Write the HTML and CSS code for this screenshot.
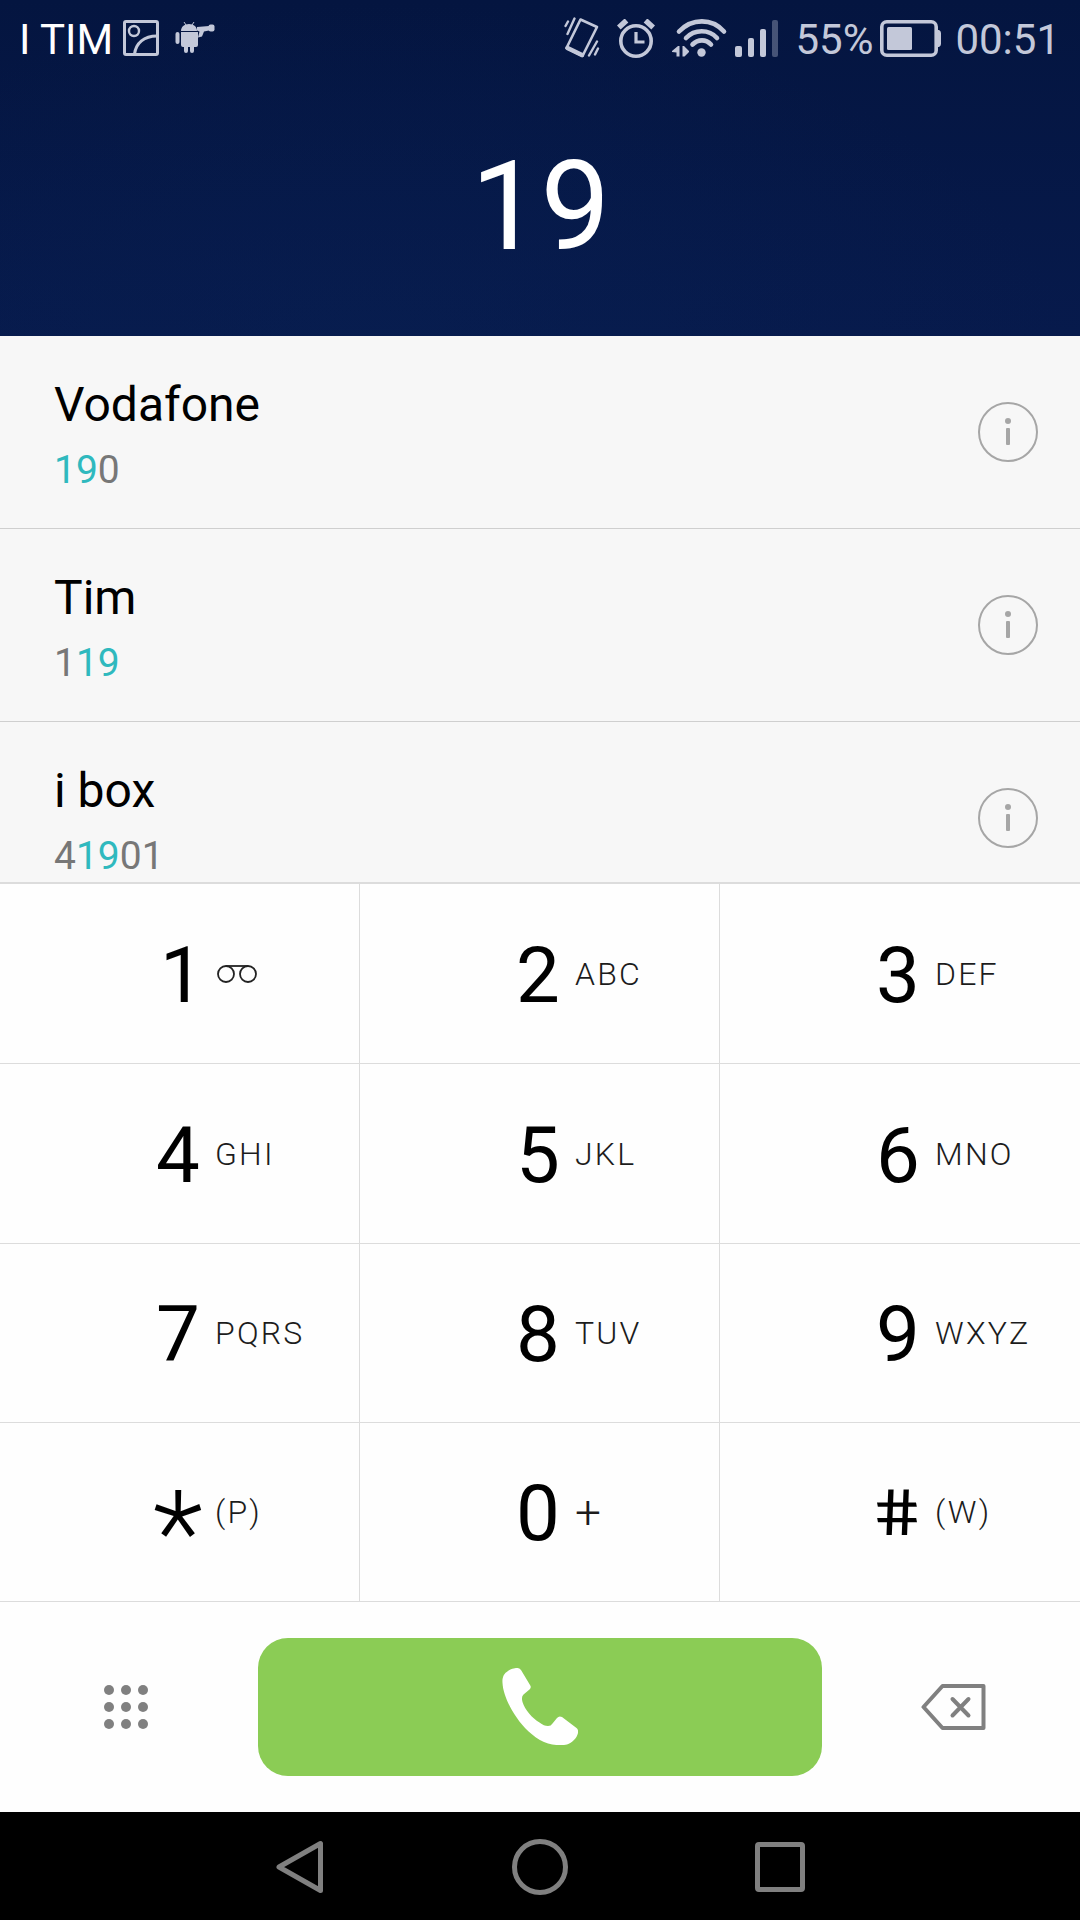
FILE: index.html
```html
<!DOCTYPE html>
<html lang="it">
<head>
  <meta charset="UTF-8">
  <title>Telefono</title>
  <link rel="stylesheet" href="styles.css">
</head>
<body>

  <header class="header">
    <div class="status-bar">
      <div class="status-left">
        <span class="carrier">I TIM</span>
        <svg class="icon-picture" width="36" height="36" viewBox="0 0 36 36" fill="none" stroke="currentColor" stroke-width="3">
          <rect x="1.5" y="1.5" width="33" height="33" rx="1.5"/>
          <circle cx="11" cy="11" r="5" stroke-width="2.4"/>
          <path d="M11.5 34C13 23 21 16 34 16"/>
        </svg>
        <svg class="icon-android" width="40" height="32" viewBox="0 0 40 32" fill="currentColor">
          <path d="M6 9C6 5 9 2 14 2s8 3 8 7z"/>
          <path d="M9 0l2 3M19 0l-2 3" stroke="currentColor" stroke-width="1"/>
          <path d="M6 10h17v13q0 2-2 2H19v4a2 2 0 0 1-4 0v-4h-2v4a2 2 0 0 1-4 0v-4H8q-2 0-2-2z"/>
          <rect x="0.5" y="10" width="4" height="12" rx="2"/>
          <path d="M22 5L34 4v4.500l-5 1-2 5-4 1 1.500-6-2.500-1z"/>
          <rect x="33.500" y="2.500" width="6" height="7" rx="2"/>
        </svg>
      </div>
      <div class="status-right">
        <svg class="icon-vibrate" width="36" height="42" viewBox="0 0 36 42" fill="none" stroke="currentColor" stroke-width="2.6" stroke-linecap="round" stroke-linejoin="round">
          <path d="M16.500 2.500L33 10 18.500 39 2.500 31z"/>
          <path d="M3.500 31l14.500 7" stroke-width="4.5"/>
          <path d="M10.500 1.500L3.500 17M4 4.500L1.500 9M33 24.500l-8 14M34 31.500l-3 6" stroke-width="2.4"/>
        </svg>
        <svg class="icon-alarm" width="38" height="39" viewBox="0 0 38 39" fill="none" stroke="currentColor">
          <circle cx="19" cy="22" r="15.2" stroke-width="3.6"/>
          <path d="M19 13v10h8.500" stroke-width="3.2"/>
          <path d="M1.800 8.500L9.500 1.500M28.500 1.500l7.700 7" stroke-width="5.5"/>
        </svg>
        <svg class="icon-wifi" width="56" height="38" viewBox="0 0 56 38" fill="none" stroke="currentColor" stroke-width="4.6" stroke-linecap="round">
          <path d="M7 12.500C20-1 40-1 52 12.500"/>
          <path d="M14 19c8.500-9 23-9 31 0"/>
          <path d="M20.500 25.500c5.500-5.500 13.500-5.500 18.500 0"/>
          <circle cx="29.500" cy="33.500" r="4.2" fill="currentColor" stroke="none"/>
          <path d="M7.500 27v10.500H4.500V33.500L0 33v-1l6-5zM10.500 27H12l5 5v1l-4.500 4.500h-2z" fill="currentColor" stroke="none"/>
        </svg>
        <svg class="icon-signal" width="43" height="37" viewBox="0 0 43 37" fill="currentColor">
          <rect x="0" y="26" width="7" height="11" rx="2"/>
          <rect x="13" y="18" width="6" height="19" rx="2"/>
          <rect x="25" y="9" width="6" height="28" rx="2"/>
          <rect x="37" y="0" width="6" height="37" rx="2" opacity="0.35"/>
        </svg>
        <span class="percent">55%</span>
        <svg class="icon-battery" width="61" height="37" viewBox="0 0 61 37" fill="none" stroke="currentColor">
          <rect x="1.8" y="1.8" width="54.4" height="33.4" rx="5" stroke-width="3.6"/>
          <rect x="7" y="7" width="25" height="23" rx="1.5" fill="currentColor" stroke="none"/>
          <path d="M57 10h2q2 1 2 3v11q0 2-2 3h-2z" fill="currentColor" stroke="none"/>
        </svg>
        <span class="clock">00:51</span>
      </div>
    </div>
    <div class="typed-number">19</div>
  </header>

  <ul class="results">
    <li class="result">
      <div class="contact">
        <div class="name">Vodafone</div>
        <div class="number"><b>19</b>0</div>
      </div>
      <svg class="info" width="60" height="60" viewBox="0 0 60 60">
        <circle cx="30" cy="30" r="29" fill="none" stroke="currentColor" stroke-width="2"/>
        <circle cx="30" cy="19" r="3"/>
        <rect x="28" y="26" width="4" height="17" rx="1"/>
      </svg>
    </li>
    <li class="result">
      <div class="contact">
        <div class="name">Tim</div>
        <div class="number">1<b>19</b></div>
      </div>
      <svg class="info" width="60" height="60" viewBox="0 0 60 60">
        <circle cx="30" cy="30" r="29" fill="none" stroke="currentColor" stroke-width="2"/>
        <circle cx="30" cy="19" r="3"/>
        <rect x="28" y="26" width="4" height="17" rx="1"/>
      </svg>
    </li>
    <li class="result">
      <div class="contact">
        <div class="name">i box</div>
        <div class="number">4<b>19</b>01</div>
      </div>
      <svg class="info" width="60" height="60" viewBox="0 0 60 60">
        <circle cx="30" cy="30" r="29" fill="none" stroke="currentColor" stroke-width="2"/>
        <circle cx="30" cy="19" r="3"/>
        <rect x="28" y="26" width="4" height="17" rx="1"/>
      </svg>
    </li>
  </ul>

  <main class="keypad">
    <div class="key">
      <span class="digit one">1</span>
      <svg class="voicemail" width="40" height="18" viewBox="0 0 40 18" fill="none" stroke="currentColor" stroke-width="1.8">
        <circle cx="9" cy="9" r="8"/>
        <circle cx="31" cy="9" r="8"/>
        <path d="M9 1h22"/>
      </svg>
    </div>
    <div class="key"><span class="digit">2</span><span class="letters">ABC</span></div>
    <div class="key"><span class="digit">3</span><span class="letters">DEF</span></div>
    <div class="key"><span class="digit">4</span><span class="letters">GHI</span></div>
    <div class="key"><span class="digit">5</span><span class="letters">JKL</span></div>
    <div class="key"><span class="digit">6</span><span class="letters">MNO</span></div>
    <div class="key"><span class="digit">7</span><span class="letters">PQRS</span></div>
    <div class="key"><span class="digit">8</span><span class="letters">TUV</span></div>
    <div class="key"><span class="digit">9</span><span class="letters">WXYZ</span></div>
    <div class="key"><span class="digit star">*</span><span class="letters">(P)</span></div>
    <div class="key"><span class="digit">0</span><span class="letters plus">+</span></div>
    <div class="key"><span class="digit hash">#</span><span class="letters">(W)</span></div>
  </main>

  <div class="actions">
    <svg class="dialpad" width="44" height="44" viewBox="0 0 44 44" fill="currentColor">
      <circle cx="5" cy="5" r="5"/><circle cx="22" cy="5" r="5"/><circle cx="39" cy="5" r="5"/>
      <circle cx="5" cy="22" r="5"/><circle cx="22" cy="22" r="5"/><circle cx="39" cy="22" r="5"/>
      <circle cx="5" cy="39" r="5"/><circle cx="22" cy="39" r="5"/><circle cx="39" cy="39" r="5"/>
    </svg>
    <button class="call" aria-label="Chiama">
      <svg width="76" height="78" viewBox="0 0 76 78" fill="currentColor">
        <path d="M6 3C10 0 14 0 15.500 0Q17.500 0 19 2L28.300 17.500Q29.500 19.500 27.500 21.500L21.500 26.500Q19 29 20.500 34C23 42 30 50 37.500 54.500Q42 58 46 58Q49 58 50.500 55.500L55 50Q57 47.500 60 49L74.500 60Q76.500 61.500 76 65C75 70 70 75 65 76.500C60 77.500 50 77.500 42 74C31 69 21 59 15 50C7 39 1 25 .5 15C0 9 2 5.500 6 3Z"/>
      </svg>
    </button>
    <svg class="backspace" width="65" height="46" viewBox="0 0 65 46" fill="none" stroke="currentColor" stroke-width="4" stroke-linecap="round" stroke-linejoin="round">
      <path d="M21.500 2H62.500V44H21.500L2.500 23z"/>
      <path d="M31.500 15L47.500 31.500M47.500 15L31.500 31.500"/>
    </svg>
  </div>

  <nav class="nav-bar">
    <svg width="50" height="56" viewBox="0 0 50 56"><path d="M45.500 4.500V51.500L4 28z"/></svg>
    <svg width="56" height="56" viewBox="0 0 56 56"><circle cx="28" cy="28" r="25.500"/></svg>
    <svg width="50" height="50" viewBox="0 0 50 50"><rect x="2.500" y="2.500" width="45" height="45" rx="1.500"/></svg>
  </nav>

</body>
</html>
```

FILE: styles.css
```css
* {
  box-sizing: border-box;
}

body {
  margin: 0;
  width: 1080px;
  height: 1920px;
  overflow: hidden;
  font-family: Roboto, sans-serif;
  background: #fefefe;
  color: #000;
}

svg {
  display: block;
  flex: none;
}

/* header */
.header {
  height: 336px;
  background: radial-gradient(ellipse at 35% 110%, #08205280, transparent 70%), linear-gradient(#041540, #071a4c);
  color: #fff;
}

.status-bar {
  display: flex;
  justify-content: space-between;
  height: 76px;
  padding: 0 20px 0 19px;
  font-size: 42px;
  line-height: 78px;
}

.status-left,
.status-right {
  display: flex;
  align-items: center;
  height: 76px;
}

.carrier,
.percent,
.clock {
  padding-top: 3px;
}

.status-right,
.icon-picture,
.icon-android {
  color: #c3c8d9;
}

.icon-picture {
  margin-left: 10px;
}

.icon-android {
  margin-left: 16px;
}

.icon-alarm {
  margin-left: 17px;
}

.icon-wifi {
  margin-left: 17px;
}

.icon-signal {
  margin-left: 7px;
}

.percent {
  margin-left: 17px;
}

.icon-battery {
  margin-left: 7px;
}

.clock {
  margin-left: 14px;
}

.typed-number {
  padding-left: 1px;
  font-size: 124px;
  line-height: 261px;
  text-align: center;
}

/* matching contacts */
.results {
  height: 548px;
  margin: 0;
  padding: 0;
  overflow: hidden;
  list-style: none;
  background: #f7f7f7;
  border-bottom: 2px solid #dcdcdc;
}

.result {
  display: flex;
  justify-content: space-between;
  align-items: center;
  height: 193px;
  padding: 0 42px 0 54px;
  border-bottom: 1px solid #cfcfcf;
}

.contact {
  padding-top: 10px;
}

.name {
  font-size: 48px;
  line-height: 66px;
}

.number {
  font-size: 39px;
  line-height: 65px;
  color: #777;
}

.number b {
  font-weight: normal;
  color: #2fb9be;
}

.info {
  color: #a6a6a6;
  fill: currentColor;
}

/* keypad */
.keypad {
  display: grid;
  grid-template-columns: 360px 360px 360px;
  grid-template-rows: 180px 180px 179px 179px;
}

.key {
  display: flex;
  align-items: center;
  padding-left: 156px;
  border-right: 1px solid #dcdcdc;
  border-bottom: 1px solid #dcdcdc;
}

.key:nth-child(3n) {
  border-right: none;
}

.digit {
  width: 44px;
  padding-top: 4px;
  font-size: 78px;
  line-height: 90px;
}

.one {
  padding-left: 4px;
}

.star {
  margin: 0 3px 0 -3px;
  padding-top: 41px;
  font-size: 117px;
  font-weight: 350;
}

.hash {
  padding-top: 3px;
  font-size: 64px;
  transform: skewX(11deg) scaleX(1.2);
}

.letters {
  margin-left: 15px;
  font-size: 32px;
  font-weight: 350;
  letter-spacing: 2.2px;
  color: #1c1c1c;
}

.plus {
  font-size: 46px;
  font-weight: 300;
}

.voicemail {
  margin-left: 17px;
  color: #222;
}

/* actions */
.actions {
  display: flex;
  justify-content: space-between;
  align-items: center;
  height: 210px;
  padding: 0 94px 0 104px;
  color: #808080;
}

.call {
  display: flex;
  justify-content: center;
  align-items: center;
  width: 564px;
  height: 138px;
  margin-left: 11px;
  padding: 0;
  border: none;
  border-radius: 30px;
  background: #8bcc55;
  color: #fff;
}

/* system buttons */
.nav-bar {
  display: flex;
  justify-content: center;
  align-items: center;
  gap: 187px;
  height: 108px;
  padding-top: 2px;
  background: #000;
}

.nav-bar svg {
  fill: none;
  stroke: #808080;
  stroke-width: 5;
  stroke-linejoin: round;
}
```
